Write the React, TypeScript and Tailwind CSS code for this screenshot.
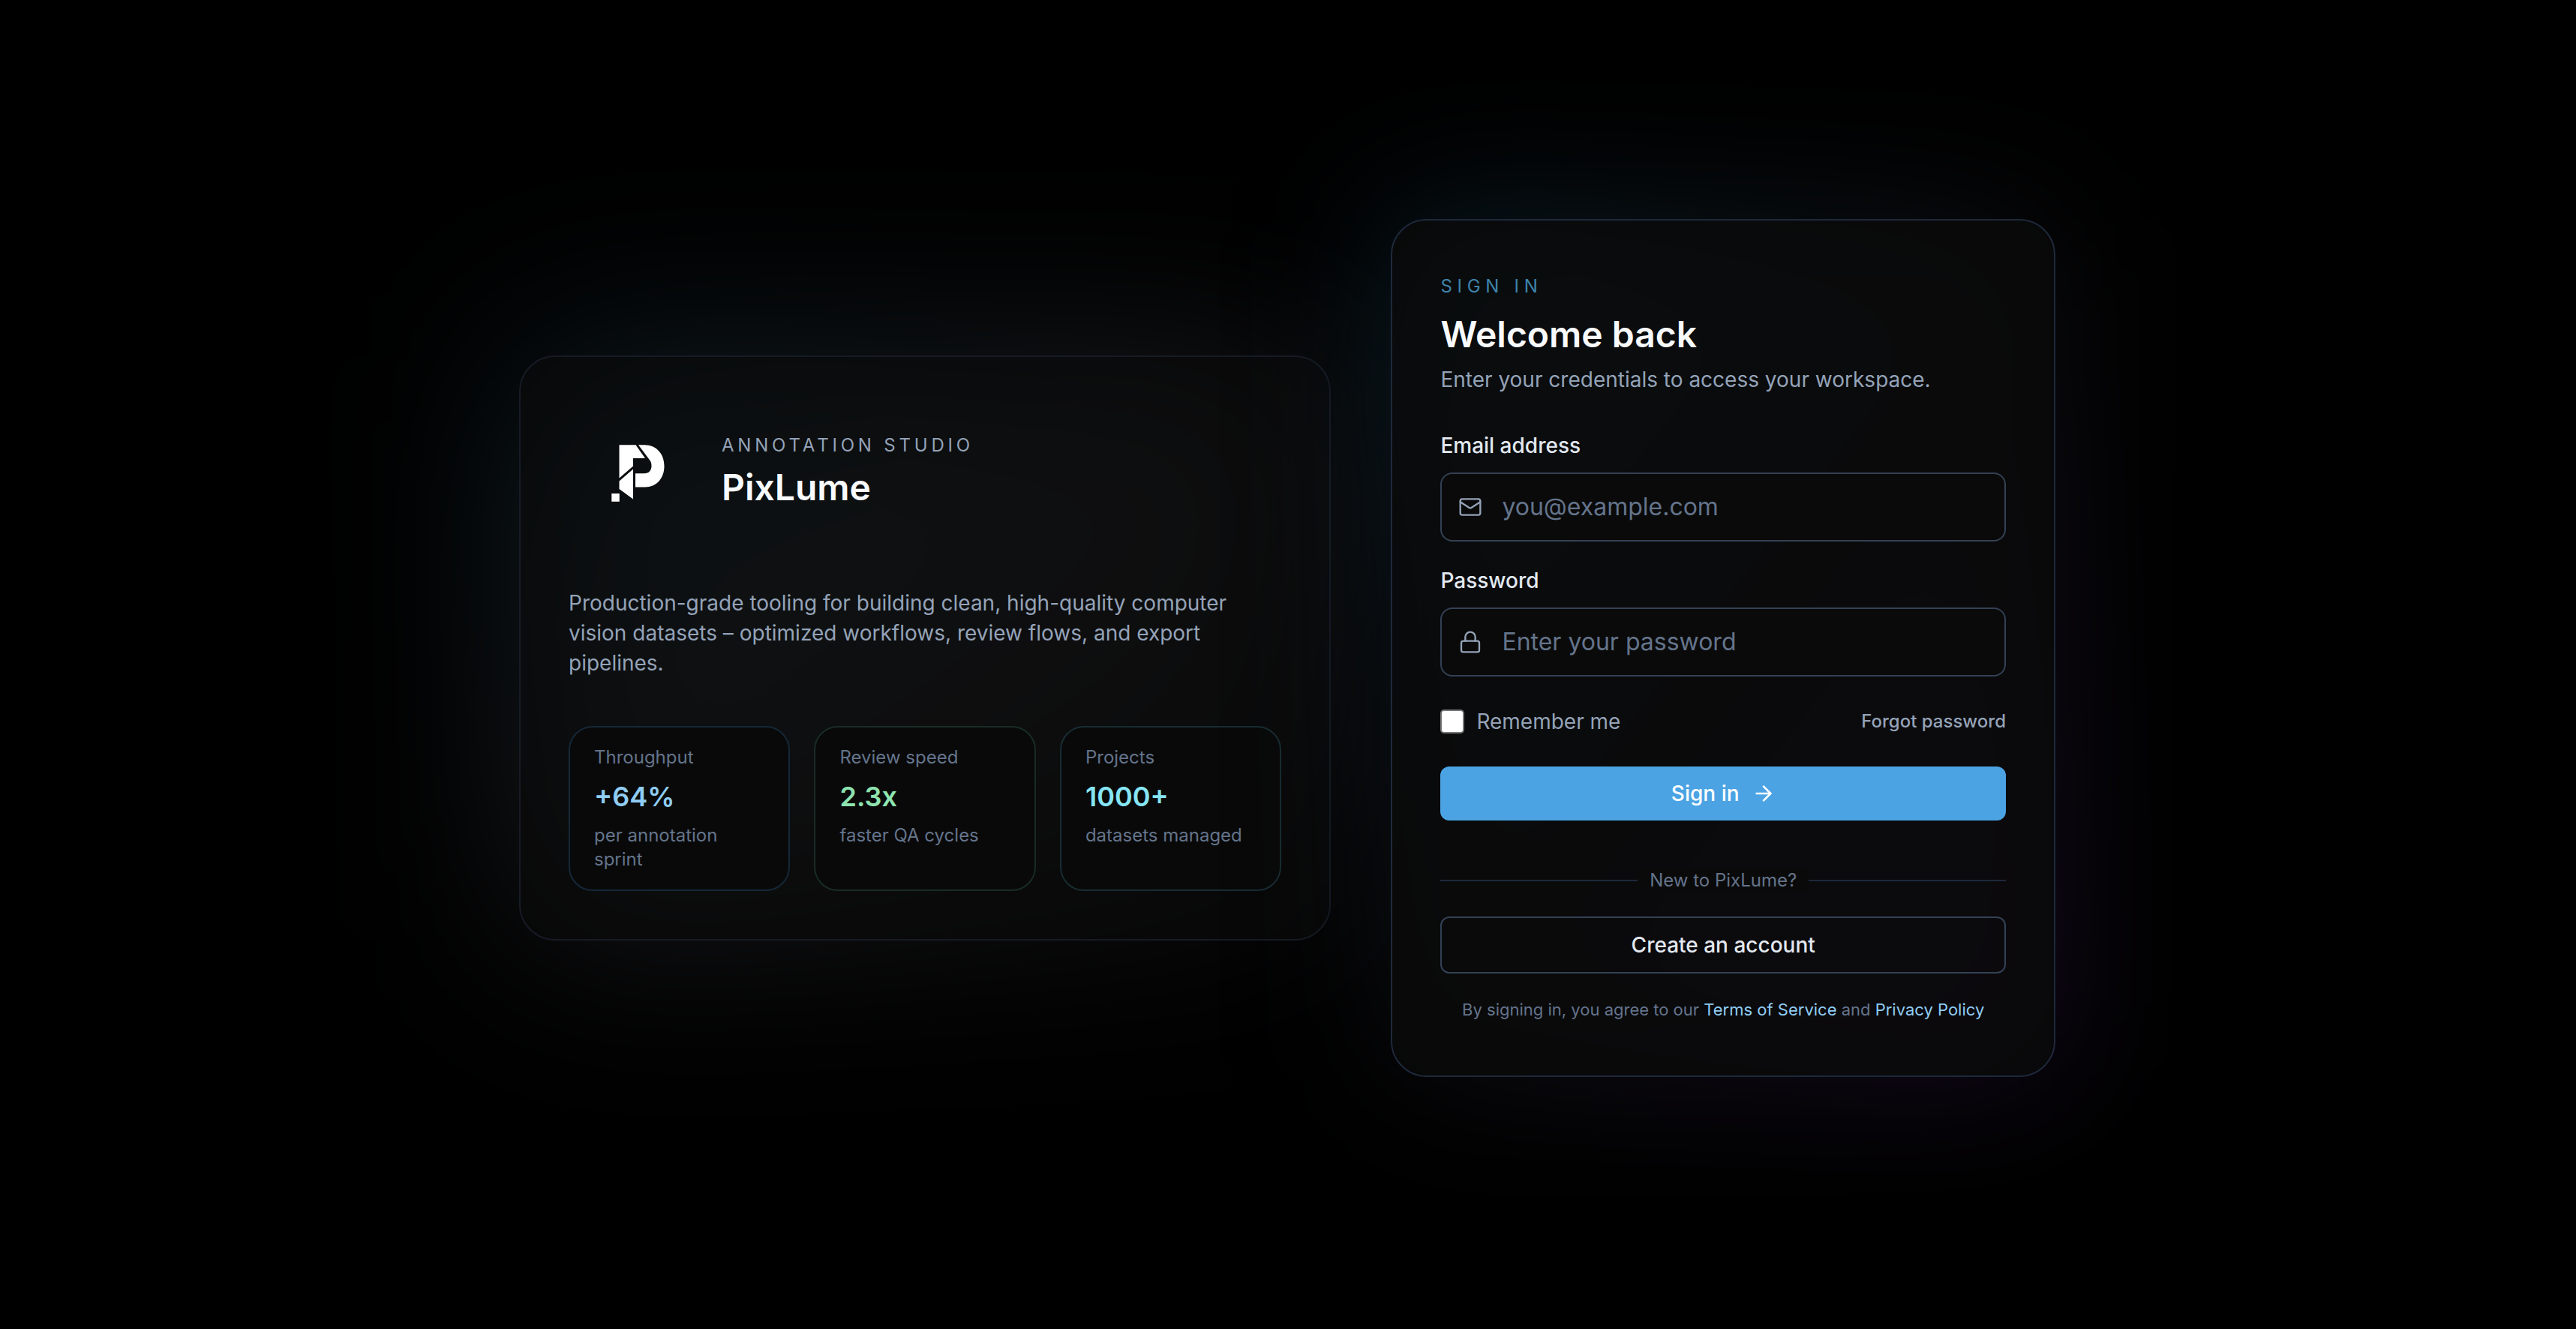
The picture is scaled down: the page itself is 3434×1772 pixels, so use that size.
import { useState } from "react";
import { ArrowRight, Lock, Mail } from "lucide-react";

const stats = [
  {
    label: "Throughput",
    value: "+64%",
    note: "per annotation sprint",
    border: "border-[#152838]",
    text: "text-[#90cdf4]",
  },
  {
    label: "Review speed",
    value: "2.3x",
    note: "faster QA cycles",
    border: "border-[#192c25]",
    text: "text-[#8ee4b0]",
  },
  {
    label: "Projects",
    value: "1000+",
    note: "datasets managed",
    border: "border-[#182d33]",
    text: "text-[#86e5f5]",
  },
];

function Logo() {
  return (
    <svg viewBox="-22 -21 180 180" className="size-[180px]" fill="#fff" aria-hidden="true">
      <path d="M45.5 32.3H67.5L80 50H64V60.5L45.5 76.5Z" />
      <path d="M71 32.3H79C95 32.3 105.5 44 105.5 60.5C105.5 77 95 88.5 80 88.5H67V70.3H79C85 70.3 88.5 66 88.5 60.5C88.5 57 88 55 86.5 53Z" />
      <path d="M45.5 80.5L64 64.5V104.5L45.5 91Z" />
      <path d="M35.3 97H45.8V107.8H35.3Z" />
    </svg>
  );
}

function BrandPanel() {
  return (
    <section className="relative">
      <div className="absolute inset-0 rounded-[48px] bg-linear-to-br from-[#0c1e27] via-[#17181b] to-[#080808] blur-[128px]" />
      <div className="relative rounded-[48px] border-2 border-[#171b26] bg-[#0a0a0a]/60 p-16">
        <div className="flex items-center gap-6">
          <Logo />
          <div>
            <p className="text-2xl leading-8 tracking-[0.2em] text-[#94a3b8] uppercase">
              Annotation Studio
            </p>
            <h1 className="mt-2 text-5xl leading-16 font-semibold text-slate-50">PixLume</h1>
          </div>
        </div>

        <p className="mt-16 text-[28px] leading-10 text-[#94a3b8]">
          Production-grade tooling for building clean, high-quality computer vision datasets –
          optimized workflows, review flows, and export pipelines.
        </p>

        <div className="mt-16 grid grid-cols-3 gap-8">
          {stats.map((s) => (
            <div key={s.label} className={`rounded-[32px] border-2 bg-[#090909] px-8 py-6 ${s.border}`}>
              <p className="text-2xl leading-8 text-[#64748b]">{s.label}</p>
              <p className={`mt-2 text-4xl leading-14 font-semibold ${s.text}`}>{s.value}</p>
              <p className="mt-2 text-2xl leading-8 text-[#64748b]">{s.note}</p>
            </div>
          ))}
        </div>
      </div>
    </section>
  );
}

function SignInPanel() {
  const [email, setEmail] = useState("");
  const [password, setPassword] = useState("");
  const [remember, setRemember] = useState(false);

  return (
    <section className="relative">
      <div className="absolute inset-0 rounded-[48px] bg-linear-to-br from-[#0a202c] via-[#0c0d11] to-[#180a24] blur-[96px]" />
      <div className="relative rounded-[48px] border-2 border-[#1e293b] bg-[#0a0a0a]/80 px-16 py-[72px]">
        <p className="text-2xl leading-8 tracking-[0.28em] text-[#3f83ab] uppercase">Sign in</p>
        <h2 className="mt-4 text-5xl leading-16 font-semibold text-slate-50">Welcome back</h2>
        <p className="mt-2 text-[28px] leading-10 text-[#94a3b8]">
          Enter your credentials to access your workspace.
        </p>

        <form onSubmit={(e) => e.preventDefault()}>
          <label htmlFor="email" className="mt-12 block text-[28px] leading-10 font-medium text-slate-200">
            Email address
          </label>
          <div className="relative mt-4">
            <Mail
              strokeWidth={1.75}
              className="absolute top-1/2 left-6 size-8 -translate-y-1/2 text-[#94a3b8]"
            />
            <input
              id="email"
              type="email"
              value={email}
              onChange={(e) => setEmail(e.target.value)}
              placeholder="you@example.com"
              className="h-[92px] w-full rounded-2xl border-2 border-[#334155] bg-[#0a0a0a] pr-6 pl-20 text-[32px] text-slate-100 placeholder-[#64748b] outline-none focus:border-sky-500"
            />
          </div>

          <label htmlFor="password" className="mt-8 block text-[28px] leading-10 font-medium text-slate-200">
            Password
          </label>
          <div className="relative mt-4">
            <Lock
              strokeWidth={1.75}
              className="absolute top-1/2 left-6 size-8 -translate-y-1/2 text-[#94a3b8]"
            />
            <input
              id="password"
              type="password"
              value={password}
              onChange={(e) => setPassword(e.target.value)}
              placeholder="Enter your password"
              className="h-[92px] w-full rounded-2xl border-2 border-[#334155] bg-[#0a0a0a] pr-6 pl-20 text-[32px] text-slate-100 placeholder-[#64748b] outline-none focus:border-sky-500"
            />
          </div>

          <div className="mt-10 flex items-center justify-between">
            <label className="flex items-center gap-4 text-[28px] leading-10 text-[#94a3b8]">
              <input
                type="checkbox"
                checked={remember}
                onChange={(e) => setRemember(e.target.checked)}
                className="size-8 appearance-none rounded-[5px] border-2 border-[#767676] bg-white checked:bg-sky-500"
              />
              Remember me
            </label>
            <a href="#forgot" className="text-2xl leading-8 font-medium text-[#94a3b8] hover:text-slate-200">
              Forgot password
            </a>
          </div>

          <button
            type="submit"
            className="mt-10 flex h-[72px] w-full items-center justify-center gap-4 rounded-xl bg-[#4ba3e3] text-[28px] font-medium text-white hover:bg-[#3f95d4]"
          >
            Sign in
            <ArrowRight className="size-8" />
          </button>
        </form>

        <div className="mt-16 flex items-center">
          <span className="h-0.5 flex-1 bg-[#1e293b]" />
          <span className="bg-[#0a0a0a] px-4 text-2xl leading-8 text-[#64748b]">New to PixLume?</span>
          <span className="h-0.5 flex-1 bg-[#1e293b]" />
        </div>

        <button
          type="button"
          className="mt-8 h-[76px] w-full rounded-xl border-2 border-[#334155] text-[28px] font-medium text-slate-200 hover:bg-slate-900"
        >
          Create an account
        </button>

        <p className="mt-8 text-center text-[22px] leading-8 text-[#64748b]">
          By signing in, you agree to our{" "}
          <a href="#terms" className="text-[#90cdf4] hover:underline">
            Terms of Service
          </a>{" "}
          and{" "}
          <a href="#privacy" className="text-[#90cdf4] hover:underline">
            Privacy Policy
          </a>
        </p>
      </div>
    </section>
  );
}

export default function App() {
  return (
    <main className="flex min-h-screen items-center justify-center overflow-hidden bg-black pt-8 pr-[34px] pb-[77px] pl-8 font-['Inter',sans-serif]">
      <div className="grid w-full max-w-[2048px] grid-cols-[11fr_9fr] items-center gap-20">
        <BrandPanel />
        <SignInPanel />
      </div>
    </main>
  );
}
